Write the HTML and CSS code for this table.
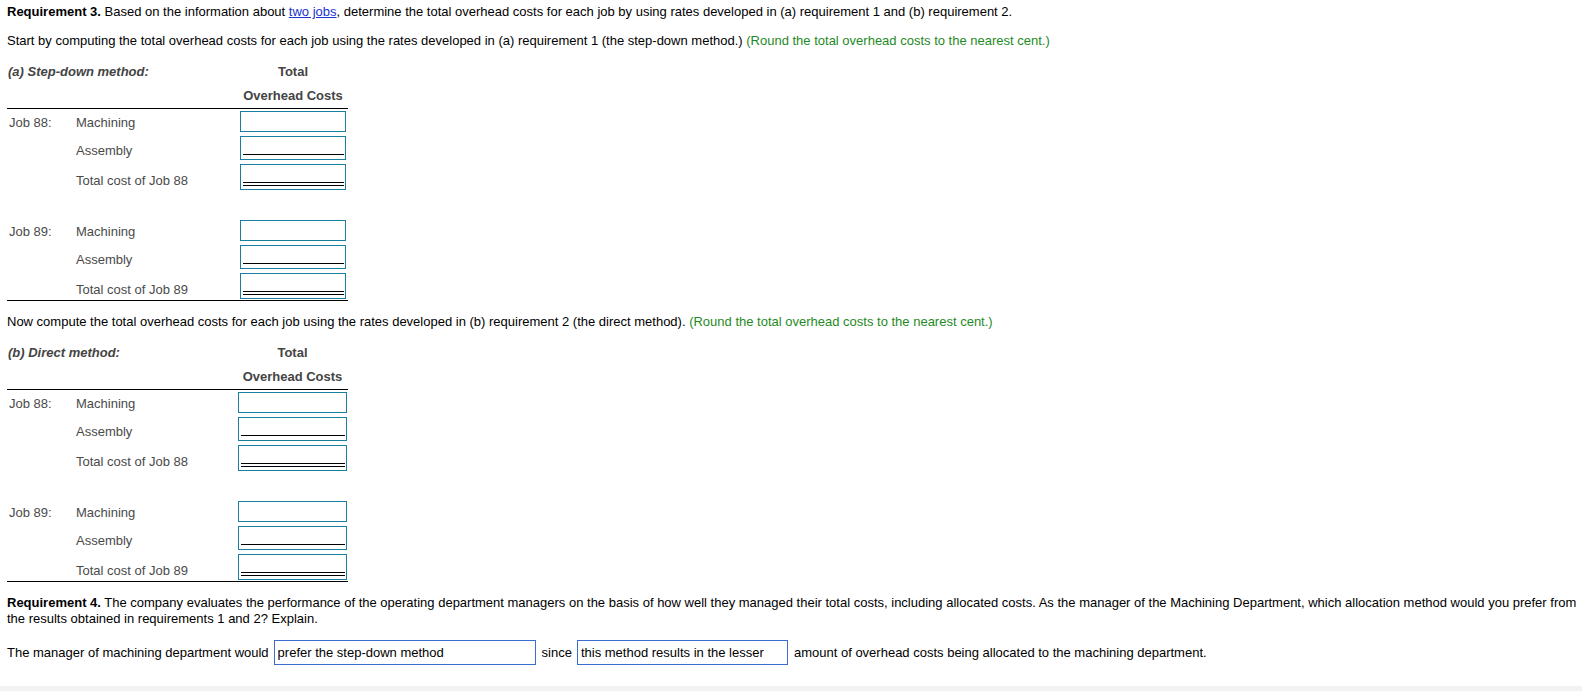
FILE: index.html
```html
<!DOCTYPE html>
<html>
<head>
<meta charset="utf-8">
<link rel="stylesheet" href="styles.css">
</head>
<body>
<div class="page">
  <div class="content">
    <p class="para"><b>Requirement 3.</b> Based on the information about <a class="link" href="#">two jobs</a>, determine the total overhead costs for each job by using rates developed in (a) requirement 1 and (b) requirement 2.</p>
    <p class="para gap-p">Start by computing the total overhead costs for each job using the rates developed in (a) requirement 1 (the step-down method.) <span class="hint">(Round the total overhead costs to the nearest cent.)</span></p>

    <div class="sheet">
      <div class="sheet-head">
        <div class="head-row head-row-1"><span class="method">(a) Step-down method:</span><span class="col-head">Total</span></div>
        <div class="head-row head-row-2"><span class="method"></span><span class="col-head">Overhead Costs</span></div>
      </div>
      <div class="sheet-body">
        <div class="row row-m"><span class="job">Job 88:</span><span class="item">Machining</span><div class="box box-m"></div></div>
        <div class="row row-a"><span class="job"></span><span class="item">Assembly</span><div class="box box-a"><div class="rule-single"></div></div></div>
        <div class="row row-t job-end"><span class="job"></span><span class="item">Total cost of Job 88</span><div class="box box-t"><div class="rule-double"></div></div></div>
        <div class="row row-m"><span class="job">Job 89:</span><span class="item">Machining</span><div class="box box-m"></div></div>
        <div class="row row-a"><span class="job"></span><span class="item">Assembly</span><div class="box box-a"><div class="rule-single"></div></div></div>
        <div class="row row-t last"><span class="job"></span><span class="item">Total cost of Job 89</span><div class="box box-t"><div class="rule-double"></div></div></div>
      </div>
    </div>

    <p class="para after-sheet">Now compute the total overhead costs for each job using the rates developed in (b) requirement 2 (the direct method). <span class="hint">(Round the total overhead costs to the nearest cent.)</span></p>

    <div class="sheet sheet-b">
      <div class="sheet-head">
        <div class="head-row head-row-1"><span class="method">(b) Direct method:</span><span class="col-head">Total</span></div>
        <div class="head-row head-row-2"><span class="method"></span><span class="col-head">Overhead Costs</span></div>
      </div>
      <div class="sheet-body">
        <div class="row row-m"><span class="job">Job 88:</span><span class="item">Machining</span><div class="box box-m"></div></div>
        <div class="row row-a"><span class="job"></span><span class="item">Assembly</span><div class="box box-a"><div class="rule-single"></div></div></div>
        <div class="row row-t job-end"><span class="job"></span><span class="item">Total cost of Job 88</span><div class="box box-t"><div class="rule-double"></div></div></div>
        <div class="row row-m"><span class="job">Job 89:</span><span class="item">Machining</span><div class="box box-m"></div></div>
        <div class="row row-a"><span class="job"></span><span class="item">Assembly</span><div class="box box-a"><div class="rule-single"></div></div></div>
        <div class="row row-t last"><span class="job"></span><span class="item">Total cost of Job 89</span><div class="box box-t"><div class="rule-double"></div></div></div>
      </div>
    </div>

    <p class="para req4"><b>Requirement 4.</b> The company evaluates the performance of the operating department managers on the basis of how well they managed their total costs, including allocated costs. As the manager of the Machining Department, which allocation method would you prefer from the results obtained in requirements 1 and 2? Explain.</p>

    <div class="answer">
      <span>The manager of machining department would</span>
      <span class="choice choice-1">prefer the step-down method</span>
      <span class="since">since</span>
      <span class="choice choice-2">this method results in the lesser</span>
      <span class="tail">amount of overhead costs being allocated to the machining department.</span>
    </div>
  </div>
  <div class="footer"></div>
</div>
</body>
</html>
```

FILE: styles.css
```css
html, body {
  margin: 0;
  padding: 0;
  background: #ffffff;
}

body {
  font-family: "Liberation Sans", Arial, sans-serif;
  font-size: 13px;
  color: #000;
}

.page {
  min-height: 100vh;
  display: flex;
  flex-direction: column;
}

.content {
  padding: 5px 0 0 7px;
}

.footer {
  flex: 1;
  background: #f2f2f2;
}

.para {
  margin: 0;
  line-height: 14px;
}

.gap-p {
  margin-top: 15px;
}

.link {
  color: #2233cc;
  text-decoration: underline;
}

.hint {
  color: #1f8a1f;
}

/* worksheet */
.sheet {
  width: 341px;
  margin-top: 11px;
  border-bottom: 1px solid #000;
}

.sheet-head {
  border-bottom: 1px solid #000;
}

.head-row {
  display: flex;
  color: #444;
  font-weight: bold;
}

.head-row-1 {
  line-height: 25px;
}

.head-row-2 {
  line-height: 24px;
}

.method {
  flex: 1;
  font-style: italic;
  padding-left: 1px;
}

.col-head {
  width: 106px;
  margin-right: 2px;
  text-align: center;
  white-space: nowrap;
}

.sheet-b .col-head {
  width: 109px;
  margin-right: 1px;
}

.sheet-body {
  padding-top: 2px;
}

.row {
  display: flex;
  align-items: flex-end;
  color: #4a4a4a;
  line-height: 15px;
}

.job {
  width: 67px;
  padding-left: 2px;
  margin-bottom: 6px;
}

.item {
  flex: 1;
  margin-bottom: 6px;
}

.box {
  box-sizing: border-box;
  width: 106px;
  margin-right: 2px;
  margin-bottom: 4px;
  border: 1px solid #1a7e9e;
  display: flex;
  flex-direction: column;
  justify-content: flex-end;
  padding: 0 1px 0 2px;
}

.sheet-b .box {
  width: 109px;
  margin-right: 1px;
}

.box-m { height: 21px; }
.box-a { height: 24px; padding-bottom: 4px; }
.box-t { height: 26px; padding-bottom: 3px; }

.job-end { margin-bottom: 26px; }
.last .box { margin-bottom: 1px; }
.last .job, .last .item { margin-bottom: 3px; }

.rule-single {
  border-bottom: 1px solid #000;
}

.rule-double {
  height: 2px;
  border-top: 1px solid #000;
  border-bottom: 1px solid #000;
}

.after-sheet {
  margin-top: 14px;
}

.req4 {
  margin-top: 13px;
  line-height: 16px;
}

/* answer line */
.answer {
  display: flex;
  align-items: center;
  margin-top: 13px;
  margin-bottom: 21px;
  line-height: 14px;
}

.choice {
  box-sizing: border-box;
  height: 25px;
  border: 1px solid #3a6dcc;
  display: flex;
  align-items: center;
  padding-left: 3px;
  color: #000;
}

.choice-1 {
  width: 262px;
  margin-left: 5px;
}

.since {
  margin-left: 6px;
}

.choice-2 {
  width: 211px;
  margin-left: 5px;
}

.tail {
  margin-left: 6px;
}
```
